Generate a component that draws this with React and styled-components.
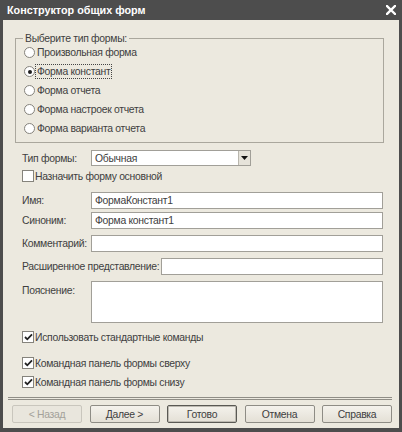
import React from "react";
import styled, { createGlobalStyle, css } from "styled-components";

const Global = createGlobalStyle`
  html, body { margin: 0; padding: 0; background: #ffffff; }
  body { font-family: "Liberation Sans", Arial, sans-serif; }
  * { box-sizing: border-box; }
`;

const Window = styled.div`
  width: 402px;
  height: 432px;
  background: #4d4d4d;
  display: flex;
  flex-direction: column;
  padding: 0 3px 4px 3px;
`;

const TitleBar = styled.div`
  height: 20px;
  flex: none;
  display: flex;
  align-items: center;
  justify-content: space-between;
  padding: 0 2px 0 4px;
  color: #ffffff;
  font-weight: bold;
  font-size: 10.8px;
`;

const CloseBtn = styled.div`
  width: 12px;
  height: 12px;
  display: flex;
  align-items: center;
  justify-content: center;
`;

const Body = styled.div`
  flex: 1;
  background: #ece9df;
  display: flex;
  flex-direction: column;
  padding: 12px 7px 0 5px;
  color: #404040;
  font-size: 10.4px;
  letter-spacing: -0.3px;
`;

const GroupBox = styled.fieldset`
  margin: 0 8px 0 7px;
  padding: 0 4px 4px 8px;
  border: 1px solid #aaa79d;
  min-width: 0;
`;

const Legend = styled.legend`
  font-size: 10.4px;
  line-height: 13px;
  padding: 0 2px;
  margin-left: -1px;
  color: #404040;
`;

const RadioList = styled.div`
  display: flex;
  flex-direction: column;
  margin-top: -2px;
`;

const RadioRow = styled.div`
  height: 19px;
  display: flex;
  align-items: center;
  gap: 1px;
`;

const RadioCircle = styled.span`
  width: 11px;
  height: 11px;
  border-radius: 50%;
  border: 1px solid #85837c;
  background: #ffffff;
  display: flex;
  align-items: center;
  justify-content: center;
  flex: none;
  &::after {
    content: "";
    width: 4px;
    height: 4px;
    border-radius: 50%;
    background: ${(p) => (p.$checked ? "#1e1e1e" : "transparent")};
  }
`;

const OptionText = styled.span`
  line-height: 13px;
  padding: 0 1px;
  outline: ${(p) => (p.$focused ? "1px dotted #444" : "none")};
  outline-offset: 0;
`;

const FormArea = styled.div`
  display: flex;
  flex-direction: column;
  padding: 0 9px 0 14px;
`;

const FieldRow = styled.div`
  display: flex;
  align-items: ${(p) => (p.$top ? "flex-start" : "center")};
  margin-top: ${(p) => p.$mt}px;
`;

const Label = styled.span`
  width: ${(p) => p.$w || 69}px;
  flex: none;
  white-space: nowrap;
  padding-top: ${(p) => (p.$top ? 3 : 0)}px;
  line-height: 13px;
`;

const inputBox = css`
  border: 1px solid #a19f98;
  background: #ffffff;
  font-family: "Liberation Sans", Arial, sans-serif;
  font-size: 10.4px;
  color: #404040;
`;

const TextBox = styled.div`
  ${inputBox};
  flex: 1;
  height: 17px;
  padding: 0 3px;
  display: flex;
  align-items: center;
`;

const TextArea = styled.div`
  ${inputBox};
  flex: 1;
  height: 42px;
`;

const Combo = styled.div`
  ${inputBox};
  width: 160px;
  height: 16px;
  display: flex;
  align-items: stretch;
`;

const ComboText = styled.div`
  flex: 1;
  padding: 0 3px;
  display: flex;
  align-items: center;
`;

const ComboButton = styled.div`
  width: 12px;
  background: #e6e3da;
  border-left: 1px solid #b9b6ad;
  display: flex;
  align-items: center;
  justify-content: center;
`;

const CheckRow = styled.div`
  display: flex;
  align-items: center;
  gap: 1px;
  height: 12px;
  margin-top: ${(p) => p.$mt}px;
`;

const CheckBox = styled.span`
  width: 12px;
  height: 12px;
  flex: none;
  border: 1px solid #85837c;
  background: #ffffff;
  display: flex;
  align-items: center;
  justify-content: center;
`;

const Separator = styled.div`
  margin-top: 9px;
  height: 3px;
  border-top: 1px solid #8f8d86;
  border-bottom: 1px solid #8f8d86;
`;

const ButtonBar = styled.div`
  margin-top: 5px;
  padding-left: 4px;
  display: flex;
  justify-content: space-between;
`;

const Button = styled.div`
  width: 70px;
  height: 18px;
  border-radius: 2px;
  display: flex;
  align-items: center;
  justify-content: center;
  font-size: 10.4px;
  background: linear-gradient(#f4f2ec, #e4e0d6);
  border: 1px solid ${(p) => (p.$default ? "#5a5954" : p.$disabled ? "#c9c6bd" : "#8e8c85")};
  color: ${(p) => (p.$disabled ? "#a3a19a" : "#404040")};
  ${(p) => p.$default && css`box-shadow: inset 0 0 0 1px #bdbab1;`}
  ${(p) => p.$disabled && css`background: #e9e6dd;`}
`;

const Check = () => (
  <svg width="9" height="8" viewBox="0 0 9 8">
    <path d="M1 4 L3.3 6.3 L8 1.3" fill="none" stroke="#222" strokeWidth="1.8" />
  </svg>
);

const radios = [
  { t: "Произвольная форма" },
  { t: "Форма констант", checked: true },
  { t: "Форма отчета" },
  { t: "Форма настроек отчета" },
  { t: "Форма варианта отчета" },
];

export default function App() {
  return (
    <>
      <Global />
      <Window>
        <TitleBar>
          <span>Конструктор общих форм</span>
          <CloseBtn>
            <svg width="10" height="10" viewBox="0 0 10 10">
              <path d="M1 1 L9 9 M9 1 L1 9" stroke="#fff" strokeWidth="2.4" strokeLinecap="square" />
            </svg>
          </CloseBtn>
        </TitleBar>
        <Body>
          <GroupBox>
            <Legend>Выберите тип формы:</Legend>
            <RadioList>
              {radios.map((r) => (
                <RadioRow key={r.t}>
                  <RadioCircle $checked={r.checked} />
                  <OptionText $focused={r.checked}>{r.t}</OptionText>
                </RadioRow>
              ))}
            </RadioList>
          </GroupBox>
          <FormArea>
            <FieldRow $mt={7}>
              <Label>Тип формы:</Label>
              <Combo>
                <ComboText>Обычная</ComboText>
                <ComboButton>
                  <svg width="7" height="4" viewBox="0 0 7 4">
                    <path d="M0 0 H7 L3.5 4 Z" fill="#111" />
                  </svg>
                </ComboButton>
              </Combo>
            </FieldRow>
            <CheckRow $mt={4}>
              <CheckBox />
              <span>Назначить форму основной</span>
            </CheckRow>
            <FieldRow $mt={10}>
              <Label>Имя:</Label>
              <TextBox>ФормаКонстант1</TextBox>
            </FieldRow>
            <FieldRow $mt={3}>
              <Label>Синоним:</Label>
              <TextBox>Форма констант1</TextBox>
            </FieldRow>
            <FieldRow $mt={6}>
              <Label>Комментарий:</Label>
              <TextBox />
            </FieldRow>
            <FieldRow $mt={6}>
              <Label $w={139}>Расширенное представление:</Label>
              <TextBox />
            </FieldRow>
            <FieldRow $mt={6} $top>
              <Label $top>Пояснение:</Label>
              <TextArea />
            </FieldRow>
            <CheckRow $mt={8}>
              <CheckBox><Check /></CheckBox>
              <span>Использовать стандартные команды</span>
            </CheckRow>
            <CheckRow $mt={14}>
              <CheckBox><Check /></CheckBox>
              <span>Командная панель формы сверху</span>
            </CheckRow>
            <CheckRow $mt={7}>
              <CheckBox><Check /></CheckBox>
              <span>Командная панель формы снизу</span>
            </CheckRow>
          </FormArea>
          <Separator />
          <ButtonBar>
            <Button $disabled>&lt; Назад</Button>
            <Button>Далее &gt;</Button>
            <Button $default>Готово</Button>
            <Button>Отмена</Button>
            <Button>Справка</Button>
          </ButtonBar>
        </Body>
      </Window>
    </>
  );
}
